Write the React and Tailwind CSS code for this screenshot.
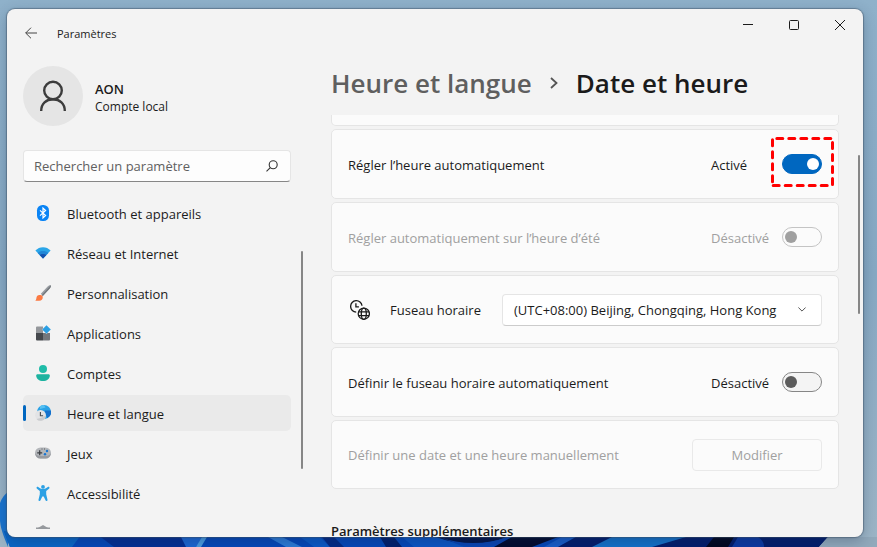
import { useState } from 'react';

const BluetoothIcon = () => (
  <svg viewBox="0 0 16 16" className="size-4">
    <rect x="2" width="12" height="16" rx="5.5" fill="#0a84f5"/>
    <path d="M5 5.4l5.6 5.1L8 12.9V3.1l2.6 2.4L5 10.6" fill="none" stroke="#fff" strokeWidth="1.2"/>
  </svg>
);

const NetworkIcon = () => (
  <svg viewBox="0 0 16 16" className="size-4">
    <path d="M.4 5.6C2.500 3.400 5 2.200 8 2.200s5.500 1.200 7.600 3.400L8 13.600z" fill="#2aa5e8"/>
    <path d="M2.700 8C4.200 6.600 6 6 8 6s3.800.6 5.300 2L8 13.600z" fill="#1f86d6"/>
    <path d="M4.700 10.100C5.600 9.300 6.700 8.900 8 8.900s2.400.4 3.300 1.200L8 13.600z" fill="#1451ad"/>
  </svg>
);

const BrushIcon = () => (
  <svg viewBox="0 0 16 16" className="size-4">
    <path d="M15.700.3c-.9-.5-2 .2-2.800 1L5.800 8.800l2 2.300 7-7.600c.9-1 1.500-2.400.9-3.200z" fill="#9a9ea3"/>
    <path d="M15.700.3L6.900 10l.9 1.100 7-7.600c.9-1 1.500-2.400.9-3.200z" fill="#74797e"/>
    <path d="M7.700 11.400c.5 2.500-1 4.300-3.600 4.300H.2c.9-.7 1.100-1.600 1.200-2.800.2-2 1.500-3.100 3.100-3 1.500 0 2.600.4 3.200 1.500z" fill="#fb7a43"/>
  </svg>
);

const AppsIcon = () => (
  <svg viewBox="0 0 16 16" className="size-4">
    <path d="M2 1.500h6V8H1V2.500a1 1 0 0 1 1-1z" fill="#94979b"/>
    <path d="M1 8h7v7.500H2a1 1 0 0 1-1-1z" fill="#45484d"/>
    <path d="M8 8h7v6.500a1 1 0 0 1-1 1H8z" fill="#74777c"/>
    <path d="M11.500 0L16 4.500 11.500 9 7 4.500z" fill="#f3f3f3"/>
    <path d="M11.500.2l4.300 4.300-4.300 4.300-4.300-4.300z" fill="#2b9fe3"/>
  </svg>
);

const AccountIcon = () => (
  <svg viewBox="0 0 16 16" className="size-4">
    <circle cx="8" cy="4" r="4" fill="#1fbca8"/>
    <path d="M2.500 9.200h11c.8 0 1.300.6 1.300 1.300 0 3.500-3 5.500-6.800 5.500s-6.800-2-6.800-5.500c0-.7.5-1.300 1.300-1.300z" fill="#1db3a0"/>
  </svg>
);

const TimeIcon = () => (
  <svg viewBox="0 0 16 16" className="size-4">
    <circle cx="9" cy="7" r="7" fill="#2aa2e6"/>
    <path d="M9.500 5.500H16a7 7 0 0 1-3.800 7.700z" fill="#1470cc"/>
    <path d="M5 1.300A7 7 0 0 1 9 0l1.500 2.500L5 4z" fill="#55c0f2"/>
    <circle cx="5.500" cy="10.300" r="5.400" fill="#e2e3e5"/>
    <path d="M1.500 14A5.400 5.400 0 0 0 10.900 10.500L5.500 13z" fill="#c9cbce"/>
    <path d="M5.400 7v3.800h2.700" fill="none" stroke="#4a4d52" strokeWidth="1.100"/>
  </svg>
);

const GamesIcon = () => (
  <svg viewBox="0 0 16 16" className="size-4">
    <rect y="2.500" width="16" height="11" rx="5.500" fill="#b3b6ba"/>
    <path d="M0 8a5.500 5.500 0 0 0 5.500 5.500h5A5.500 5.500 0 0 0 16 8c-1 2-3 3-5 3H5C3 11 1 10 0 8z" fill="#989ba0"/>
    <path d="M4.700 5.300v5M2.200 7.800h5" stroke="#3b3e43" strokeWidth="1.200"/>
    <path d="M6.500 4h1M9 4h1" stroke="#55585d"/>
    <circle cx="12" cy="6" r="1.200" fill="#1976d2"/>
    <circle cx="10" cy="9.300" r="1.200" fill="#1976d2"/>
  </svg>
);

const AccessIcon = () => (
  <svg viewBox="0 0 16 16" className="size-4">
    <circle cx="8" cy="1.900" r="1.900" fill="#2ba0e4"/>
    <path d="M1.700 2.200c.4-.6 1-.6 1.500-.3C4.700 3 6.200 4 8 4s3.300-1 4.800-2.100c.5-.3 1.100-.3 1.500.3.4.5.2 1.100-.3 1.500L11.200 6v3.200l1.300 5.500c.1.600-.2 1.100-.7 1.200-.6.200-1.100-.1-1.300-.7L8.700 11.500H7.300l-1.800 3.700c-.2.600-.7.900-1.300.7-.5-.1-.8-.6-.7-1.200l1.300-5.500V6L2 3.700c-.5-.4-.7-1-.3-1.500z" fill="#2ba0e4"/>
  </svg>
);

const PrivacyIcon = () => (
  <svg viewBox="0 0 16 16" className="size-4">
    <path d="M8 0c2.200 1.700 4.500 2.500 7 2.600V8c0 4-2.800 6.700-7 8-4.200-1.300-7-4-7-8V2.600C3.500 2.500 5.800 1.700 8 0z" fill="#96999d"/>
  </svg>
);

const ZoneIcon = () => (
  <svg viewBox="0 0 20 20" fill="none" stroke="#1b1b1b" strokeWidth="1.300" className="size-5 shrink-0">
    <path d="M6.200 12.100A5.700 5.700 0 1 1 12 5.800"/>
    <path d="M5.900 3.200v3.600h3"/>
    <circle cx="13.800" cy="13.700" r="5.600"/>
    <ellipse cx="13.800" cy="13.700" rx="2.500" ry="5.600"/>
    <path d="M8.500 11.900h10.600M8.500 15.600h10.600"/>
  </svg>
);

const NAV = [
  ['Bluetooth et appareils', BluetoothIcon],
  ['Réseau et Internet', NetworkIcon],
  ['Personnalisation', BrushIcon],
  ['Applications', AppsIcon],
  ['Comptes', AccountIcon],
  ['Heure et langue', TimeIcon],
  ['Jeux', GamesIcon],
  ['Accessibilité', AccessIcon],
  ['Confidentialité et sécurité', PrivacyIcon],
];

function Wallpaper() {
  return (
    <svg viewBox="0 0 877 60" preserveAspectRatio="none" className="absolute bottom-0 left-0 h-[60px] w-full">
      <path d="M0 16C2 11 4 8 8 5v55C5 52 1 44 0 34z" fill="#1a74cf"/>
      <path d="M4 44h824l-9 16H10z" fill="#0547b8"/>
      <path d="M4 44h80l-12 16H10z" fill="#0a66c6"/>
      <path d="M98 48h82l8 12h-74z" fill="#042e93"/>
      <path d="M180 48h28l-12 12h-10z" fill="#1c66d2"/>
      <path d="M202 50h5l-6 10h-5z" fill="#4a9be0"/>
      <path d="M268 50h14l20 10h-16z" fill="#2c7ad6"/>
      <path d="M300 50h20l10 10h-16z" fill="#0b59c6"/>
      <path d="M322 50h12l10 10h-14z" fill="#032a86"/>
      <path d="M380 50h14l8 10h-16z" fill="#021e6c"/>
      <path d="M402 50h38l24 10h-50z" fill="#0c55c4"/>
      <path d="M436 50h70c-20 9-46 9-70 0z" fill="#03144a"/>
      <path d="M440 50c20 8 46 8 68 0l-6 7c-20 5-40 3-62-7z" fill="#0a44b2"/>
      <path d="M512 50h46l-26 10h-38z" fill="#020a2e"/>
      <path d="M562 50h14l-18 10h-14z" fill="#195cc8"/>
      <path d="M576 50h252l-9 10H558z" fill="#031c6c"/>
      <path d="M612 50h74l-34 10h-60z" fill="#1470c8"/>
      <path d="M714 50h20l-6 10h-22z" fill="#01061f"/>
      <path d="M738 50h20c5 3 6 7 6 10h-32z" fill="#0c38a2"/>
      <path d="M828 50l-9 10h58V50z" fill="#92a9bb"/>
    </svg>
  );
}

function Toggle({ id, defaultOn = false, disabled = false, highlight = false }) {
  const [on, setOn] = useState(defaultOn);
  return (
    <div className={`flex items-center gap-3 ${disabled ? 'text-[#a0a0a0]' : ''}`}>
      <span className="w-[59px] pt-0.5">{on ? 'Activé' : 'Désactivé'}</span>
      <span className="relative flex">
        <input
          id={id}
          type="checkbox"
          role="switch"
          checked={on}
          disabled={disabled}
          onChange={e => setOn(e.target.checked)}
          className="flex h-5 w-10 appearance-none items-center rounded-full border border-[#868686] bg-[#f4f4f4] px-0.5 before:size-3 before:rounded-full before:bg-[#5c5c5c] checked:justify-end checked:border-[#0067c0] checked:bg-[#0067c0] checked:before:bg-white disabled:border-[#c4c4c4] disabled:bg-[#fbfbfb] disabled:before:bg-[#a0a0a0]"
        />
        {highlight && (
          <svg viewBox="0 0 63 50" fill="none" stroke="#ff0000" strokeWidth="3" strokeLinecap="round" strokeDasharray="6 6" className="pointer-events-none absolute -left-[11px] -top-[17px] h-[50px] w-[63px] max-w-none">
            <path d="M5.800 1.500H60M2.200 48.500h55.300M1.500 2.800v42.700M61.500 5.500v42"/>
          </svg>
        )}
      </span>
    </div>
  );
}

function Card({ tall = false, children }) {
  return (
    <div className={`flex shrink-0 items-center justify-between rounded-[5px] border border-[#e5e5e5] bg-[#fbfbfb] px-4 ${tall ? 'h-[70px]' : 'h-[69px]'}`}>
      {children}
    </div>
  );
}

export default function App() {
  const [active, setActive] = useState('Heure et langue');

  return (
    <div className="relative h-screen overflow-hidden bg-linear-to-b from-[#8fb1ca] via-[#87a9c4] to-[#9db5c6] pt-[9px] pr-3.5 pb-2.5 pl-[7px] font-['Open_Sans',sans-serif] text-[13px] leading-5 text-[#1b1b1b]">
      <Wallpaper />

      <div className="relative flex h-full flex-col overflow-hidden rounded-lg bg-[#f3f3f3] shadow-[0_0_1px_1px_rgba(60,80,100,0.5),0_4px_14px_rgba(20,40,70,0.3)]">
        {/* Title bar */}
        <header className="flex h-12 shrink-0 items-start justify-between pl-4">
          <div className="flex h-12 items-center gap-[18px]">
            <button aria-label="Retour" className="flex w-4 justify-center">
              <svg viewBox="0 0 12 12" fill="none" stroke="#454545" className="size-3">
                <path d="M12 6H.7M6 .7L.7 6 6 11.300"/>
              </svg>
            </button>
            <span className="pt-0.5 text-[11px]">Paramètres</span>
          </div>
          <div className="flex">
            <button aria-label="Réduire" className="flex h-8 w-[46px] items-center justify-center">
              <svg viewBox="0 0 10 10" stroke="#1b1b1b" className="size-2.5"><path d="M0 4.500h10"/></svg>
            </button>
            <button aria-label="Agrandir" className="flex h-8 w-[46px] items-center justify-center">
              <svg viewBox="0 0 10 10" fill="none" stroke="#1b1b1b" className="size-2.5"><rect x=".5" y=".5" width="9" height="9" rx="1"/></svg>
            </button>
            <button aria-label="Fermer" className="flex h-8 w-[46px] items-center justify-center">
              <svg viewBox="0 0 10 10" stroke="#1b1b1b" className="size-2.5"><path d="M0 0l10 10M10 0L0 10"/></svg>
            </button>
          </div>
        </header>

        <div className="flex min-h-0 flex-1 gap-7">
          {/* Sidebar */}
          <aside className="flex w-[296px] shrink-0 flex-col pb-2 pl-4">
            <div className="flex items-center gap-3 pt-[9px]">
              <div className="flex size-[60px] items-center justify-center rounded-full bg-[#e5e5e5]">
                <svg viewBox="0 0 30 32" fill="none" stroke="#3c3c3c" strokeWidth="2.400" className="h-8 w-[30px]">
                  <circle cx="15" cy="10.500" r="8.800"/>
                  <path d="M3.200 31c0-7.500 5-11.700 11.800-11.700S26.800 23.500 26.800 31"/>
                </svg>
              </div>
              <div className="pt-1 leading-[18px]">
                <p className="font-semibold">AON</p>
                <p className="text-[12px] leading-[18px]">Compte local</p>
              </div>
            </div>

            <div className="mt-6 mr-3 flex h-8 shrink-0 items-center rounded-[4px] border border-b-[#868686] border-[#e5e5e5] bg-[#fdfdfd] px-2.5">
              <input aria-label="Rechercher un paramètre" placeholder="Rechercher un paramètre" className="min-w-0 flex-1 outline-none placeholder:text-[#606060]" />
              <svg viewBox="0 0 12 12" fill="none" stroke="#333" strokeWidth="1.100" className="mr-0.5 size-3">
                <circle cx="7.200" cy="4.700" r="4"/>
                <path d="M4.300 7.600L.5 11.400"/>
              </svg>
            </div>

            <div className="mt-[13px] flex min-h-0 flex-1 gap-2.5 overflow-hidden">
              <nav className="flex flex-1 flex-col gap-1">
                {NAV.map(([label, Icon]) => (
                  <a
                    key={label}
                    href="#"
                    onClick={() => setActive(label)}
                    className={`relative flex h-9 shrink-0 items-center gap-4 rounded-[5px] pl-3 ${active === label ? 'bg-[#eaeaea] before:absolute before:left-0 before:h-4 before:w-[3px] before:rounded-full before:bg-[#0067c0]' : ''}`}
                  >
                    <Icon />
                    <span className="pt-0.5">{label}</span>
                  </a>
                ))}
              </nav>
              <div className="mt-14 h-[218px] w-0.5 rounded-full bg-[#868686]" />
            </div>
          </aside>

          {/* Content */}
          <main className="flex min-w-0 flex-1 flex-col">
            <h1 className="mt-2 flex h-9 shrink-0 items-center gap-[17px] text-[26px] leading-9 font-semibold">
              <a href="#" className="text-[#5f5f5f]">Heure et langue</a>
              <svg viewBox="0 0 10 12" fill="none" stroke="#555" strokeWidth="1.800" className="h-3 w-2.5"><path d="M2 1l5.500 5L2 11"/></svg>
              <span>Date et heure</span>
            </h1>

            <div className="mt-3.5 flex min-h-0 flex-1 overflow-hidden pr-[3px]">
              <div className="mr-[19px] flex min-w-0 flex-1 flex-col gap-[3px]">
                <div className="h-[11px] shrink-0 rounded-b-[5px] border border-t-0 border-[#e5e5e5] bg-[#fbfbfb]" />
                <Card tall>
                  <label htmlFor="auto-time" className="pt-0.5">Régler l’heure automatiquement</label>
                  <Toggle id="auto-time" defaultOn highlight />
                </Card>
                <Card tall>
                  <label htmlFor="dst" className="pt-0.5 text-[#a0a0a0]">Régler automatiquement sur l’heure d’été</label>
                  <Toggle id="dst" disabled />
                </Card>
                <Card>
                  <label htmlFor="zone" className="flex items-center gap-5 pl-0.5"><ZoneIcon />Fuseau horaire</label>
                  <div className="relative flex items-center">
                    <select id="zone" className="h-8 w-80 appearance-none rounded-[4px] border border-[#e5e5e5] border-b-[#cccccc] bg-white pr-[37px] pl-[11px]">
                      <option>(UTC+08:00) Beijing, Chongqing, Hong Kong</option>
                    </select>
                    <svg viewBox="0 0 8 5" fill="none" stroke="#555" className="pointer-events-none absolute right-4 h-[5px] w-2"><path d="M.4.500L4 4.100 7.600.500"/></svg>
                  </div>
                </Card>
                <Card tall>
                  <label htmlFor="auto-zone" className="pt-0.5">Définir le fuseau horaire automatiquement</label>
                  <Toggle id="auto-zone" />
                </Card>
                <Card>
                  <span className="text-[#a0a0a0]">Définir une date et une heure manuellement</span>
                  <button disabled className="h-8 w-[130px] rounded-[4px] border border-[#e9e9e9] text-[#a0a0a0]">Modifier</button>
                </Card>
                <h2 className="mt-[29px] shrink-0 font-semibold">Paramètres supplémentaires</h2>
              </div>
              <div className="mt-10 h-[159px] w-0.5 shrink-0 rounded-full bg-[#868686]" />
            </div>
          </main>
        </div>
      </div>
    </div>
  );
}
